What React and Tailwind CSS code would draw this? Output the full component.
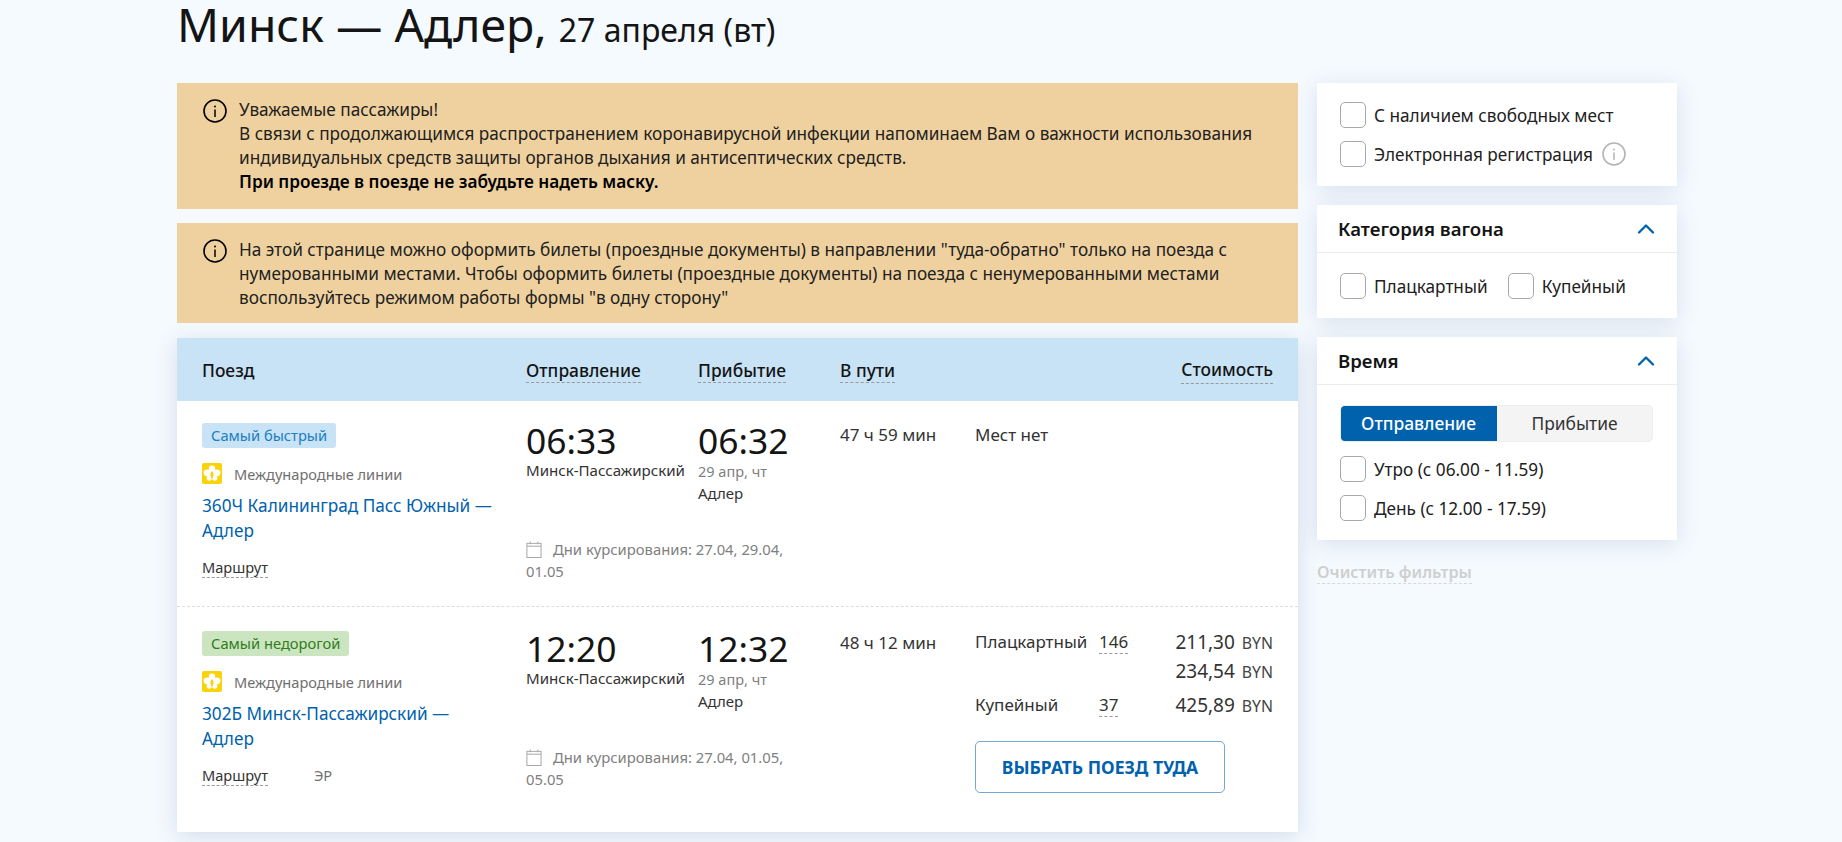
import { ChevronUp } from 'lucide-react';

const font = { fontFamily: '"Noto Sans", sans-serif' };

function InfoIcon({ className }) {
  return (
    <svg viewBox="0 0 24 24" fill="none" stroke="currentColor" className={className}>
      <circle cx="12" cy="12" r="11" strokeWidth="1.6" />
      <circle cx="12" cy="7.4" r="1" fill="currentColor" stroke="none" />
      <path d="M12 10.5v7.5" strokeWidth="1.5" />
    </svg>
  );
}

function CalendarIcon() {
  return (
    <svg viewBox="0 0 16 18" fill="none" stroke="#a3a3a3" strokeWidth="1" className="w-4 h-[17px] shrink-0">
      <rect x="0.5" y="2.5" width="15" height="15" />
      <path d="M0.5 5.5h15M4 0.5v3M12 0.5v3" />
    </svg>
  );
}

// orchid on yellow
function AirlineLogo() {
  return (
    <svg viewBox="0 0 20 21" className="w-5 h-[21px] shrink-0">
      <rect width="20" height="21" rx="2" fill="#f9d30a" />
      <ellipse cx="10" cy="5.6" rx="3.2" ry="3.2" fill="#fff" />
      <ellipse cx="5.4" cy="9.8" rx="3.8" ry="3.4" fill="#fff" />
      <ellipse cx="14.6" cy="9.8" rx="3.8" ry="3.4" fill="#fff" />
      <ellipse cx="7.2" cy="15" rx="2.6" ry="2.8" fill="#fff" />
      <ellipse cx="12.8" cy="15" rx="2.6" ry="2.8" fill="#fff" />
      <circle cx="10" cy="10.4" r="1.5" fill="#f9d30a" />
      <circle cx="10" cy="14" r="1.2" fill="#f9d30a" />
    </svg>
  );
}

function Checkbox({ label, children }) {
  return (
    <div className="flex items-center h-[26px] text-[#212121]">
      <span className="w-[26px] h-[26px] rounded-[5px] border border-[#a8a8a8] bg-white shrink-0" />
      <span className="ml-2 pt-[2px] text-[17.2px] leading-[26px] whitespace-nowrap">{label}</span>
      {children}
    </div>
  );
}

function Alert({ children, className = '' }) {
  return (
    <div className={`flex bg-[#efd19f] pl-[26px] pr-5 pt-[15px] text-[17.2px] leading-6 text-[#212121] ${className}`}>
      <InfoIcon className="w-6 h-6 shrink-0 text-black mt-px" />
      <div className="ml-3">{children}</div>
    </div>
  );
}

function SidebarCard({ title, children }) {
  return (
    <div className="bg-white shadow-[0_4px_22px_rgba(40,70,120,0.14)]">
      <div className="flex items-center justify-between h-[48px] pl-[21px] pr-[17px] border-b border-[#ebebeb]">
        <span className="text-[18.6px] font-semibold text-[#141414]">{title}</span>
        <ChevronUp className="w-7 h-7 text-[#0061ad]" strokeWidth={2} />
      </div>
      {children}
    </div>
  );
}

function Dashed({ children, className = '' }) {
  return <span className={`border-b border-dashed border-[#9a9a9a] ${className}`}>{children}</span>;
}

function Train({ badge, badgeClass, name, dep, arr, days, duration, children, extra, rowClass }) {
  return (
    <div className={`flex pl-[25px] pr-[25px] ${rowClass}`}>
      <div className="w-[324px] shrink-0">
        <span className={`inline-block align-top h-[25px] rounded-[3px] px-[9px] text-[14.7px] leading-[25px] ${badgeClass}`}>{badge}</span>
        <div className="flex items-center mt-[15px] h-[21px]">
          <AirlineLogo />
          <span className="ml-3 pt-[3px] text-[14.6px] text-[#707070]">Международные линии</span>
        </div>
        <div className="mt-[9px] w-[300px] text-[17.2px] leading-[25px] text-[#0061ad]">{name}</div>
        <div className="flex mt-[14px] text-[14.6px] leading-[20px] text-[#333]">
          <Dashed>Маршрут</Dashed>
          {extra && <span className="ml-[46px] text-[#707070]">{extra}</span>}
        </div>
      </div>
      <div className="w-[314px] shrink-0">
        <div className="flex h-[115px]">
          <div className="w-[172px]">
            <div className="text-[35.4px] leading-[34px] text-[#141414]">{dep}</div>
            <div className="text-[15.1px] leading-[26px] text-[#333] whitespace-nowrap">Минск-Пассажирский</div>
          </div>
          <div>
            <div className="text-[35.4px] leading-[34px] text-[#141414]">{arr}</div>
            <div className="mt-[3px] text-[14.5px] leading-[22px] text-[#808080]">29 апр, чт</div>
            <div className="text-[15px] leading-[22px] text-[#333]">Адлер</div>
          </div>
        </div>
        <div className="w-[270px] text-[14.8px] leading-[22px] text-[#808080]">
          <span className="inline-flex align-[-3px] mr-[11px]"><CalendarIcon /></span>
          Дни курсирования: {days}
        </div>
      </div>
      <div className="w-[135px] shrink-0 text-[17px] leading-[24px] text-[#333]">{duration}</div>
      <div className="flex-1 text-[17px] text-[#333]">{children}</div>
    </div>
  );
}

function Price({ type, seats, prices }) {
  return (
    <div className="flex">
      <span className="w-[124px] leading-[28px]">{type}</span>
      <span className="leading-[28px] h-fit"><Dashed>{seats}</Dashed></span>
      <div className="flex-1 text-right">
        {prices.map((p) => (
          <div key={p} className="leading-[29px] text-[19px] h-[29px] whitespace-nowrap">
            {p} <span className="text-[15.8px] ml-[2px] text-[#444]">BYN</span>
          </div>
        ))}
      </div>
    </div>
  );
}

export default function App() {
  return (
    <div style={font} className="h-[842px] overflow-hidden bg-[#f5faff] pl-[177px] pr-[165px]">
      <h1 className="h-[83px] text-[46.4px] leading-[48px] text-[#141414] whitespace-nowrap">
        Минск — Адлер, <span className="text-[32px]">27 апреля (вт)</span>
      </h1>
      <div className="flex gap-[19px]">
        <div className="w-[1121px] shrink-0">
          <div className="flex flex-col gap-[14px]">
            <Alert className="pb-[15px]">
              <div>
                Уважаемые пассажиры!
                <br />
                В связи с продолжающимся распространением коронавирусной инфекции напоминаем Вам о важности использования индивидуальных средств защиты органов дыхания и антисептических средств.
                <br />
                <b className="font-semibold text-black">При проезде в поезде не забудьте надеть маску.</b>
              </div>
            </Alert>
            <Alert className="pb-[13px]">
              На этой странице можно оформить билеты (проездные документы) в направлении "туда-обратно" только на поезда с нумерованными местами. Чтобы оформить билеты (проездные документы) на поезда с ненумерованными местами воспользуйтесь режимом работы формы "в одну сторону"
            </Alert>
          </div>
          <div className="mt-[15px] bg-white shadow-[0_4px_22px_rgba(40,70,120,0.16)]">
            <div className="flex items-center h-[63px] pt-px bg-[#c8e2f6] pl-[25px] pr-[25px] text-[17.4px] font-medium text-[#141414]">
              <span className="w-[324px]">Поезд</span>
              <span className="w-[172px]"><Dashed>Отправление</Dashed></span>
              <span className="w-[142px]"><Dashed>Прибытие</Dashed></span>
              <span className="flex-1"><Dashed>В пути</Dashed></span>
              <Dashed>Стоимость</Dashed>
            </div>
            <Train
              rowClass="pt-[22px] h-[206px] border-b border-dashed border-[#dddddd]"
              badge="Самый быстрый"
              badgeClass="bg-[#c8e2f6] text-[#1b7fc0]"
              name="360Ч Калининград Пасс Южный — Адлер"
              dep="06:33"
              arr="06:32"
              days="27.04, 29.04, 01.05"
              duration="47 ч 59 мин"
            >
              <div className="leading-[24px]">Мест нет</div>
            </Train>
            <Train
              rowClass="pt-[24px] h-[225px]"
              badge="Самый недорогой"
              badgeClass="bg-[#cce5c1] text-[#2f7d1b]"
              name="302Б Минск-Пассажирский — Адлер"
              dep="12:20"
              arr="12:32"
              days="27.04, 01.05, 05.05"
              duration="48 ч 12 мин"
              extra="ЭР"
            >
              <div className="-mt-[3px]">
                <Price type="Плацкартный" seats="146" prices={['211,30', '234,54']} />
                <div className="mt-[5px]"><Price type="Купейный" seats="37" prices={['425,89']} /></div>
              </div>
              <button className="mt-[21px] w-[250px] h-[52px] rounded-[5px] border border-[#74a8d3] bg-white text-[17.5px] font-bold text-[#0061ad]">
                ВЫБРАТЬ ПОЕЗД ТУДА
              </button>
            </Train>
          </div>
        </div>
        <div className="w-[360px] shrink-0">
          <div className="bg-white shadow-[0_4px_22px_rgba(40,70,120,0.14)] h-[103px] pl-[23px] pt-[19px] flex flex-col gap-[13px]">
            <Checkbox label="С наличием свободных мест" />
            <Checkbox label="Электронная регистрация">
              <span className="ml-[9px] text-[#b3b3b3]"><InfoIcon className="w-6 h-6" /></span>
            </Checkbox>
          </div>
          <div className="mt-[19px]">
            <SidebarCard title="Категория вагона">
              <div className="flex h-[65px] items-start pt-5 pl-[23px] gap-5">
                <Checkbox label="Плацкартный" />
                <Checkbox label="Купейный" />
              </div>
            </SidebarCard>
          </div>
          <div className="mt-[19px]">
            <SidebarCard title="Время">
              <div className="pl-[23px] pr-6 pt-5 h-[155px]">
                <div className="flex h-[37px] rounded-[5px] overflow-hidden bg-[#f4f4f4] border border-[#ededed] text-[17.4px]">
                  <span className="w-[157px] -m-px mr-0 bg-[#0061ad] text-white font-medium flex items-center justify-center">Отправление</span>
                  <span className="flex-1 flex items-center justify-center text-[#333]">Прибытие</span>
                </div>
                <div className="mt-[14px] flex flex-col gap-[13px]">
                  <Checkbox label="Утро (с 06.00 - 11.59)" />
                  <Checkbox label="День (с 12.00 - 17.59)" />
                </div>
              </div>
            </SidebarCard>
          </div>
          <div className="mt-5 text-[16.3px] font-semibold text-[#cfcfcf] leading-[24px]">
            <span className="border-b border-dashed border-[#d8d8d8]">Очистить фильтры</span>
          </div>
        </div>
      </div>
    </div>
  );
}
